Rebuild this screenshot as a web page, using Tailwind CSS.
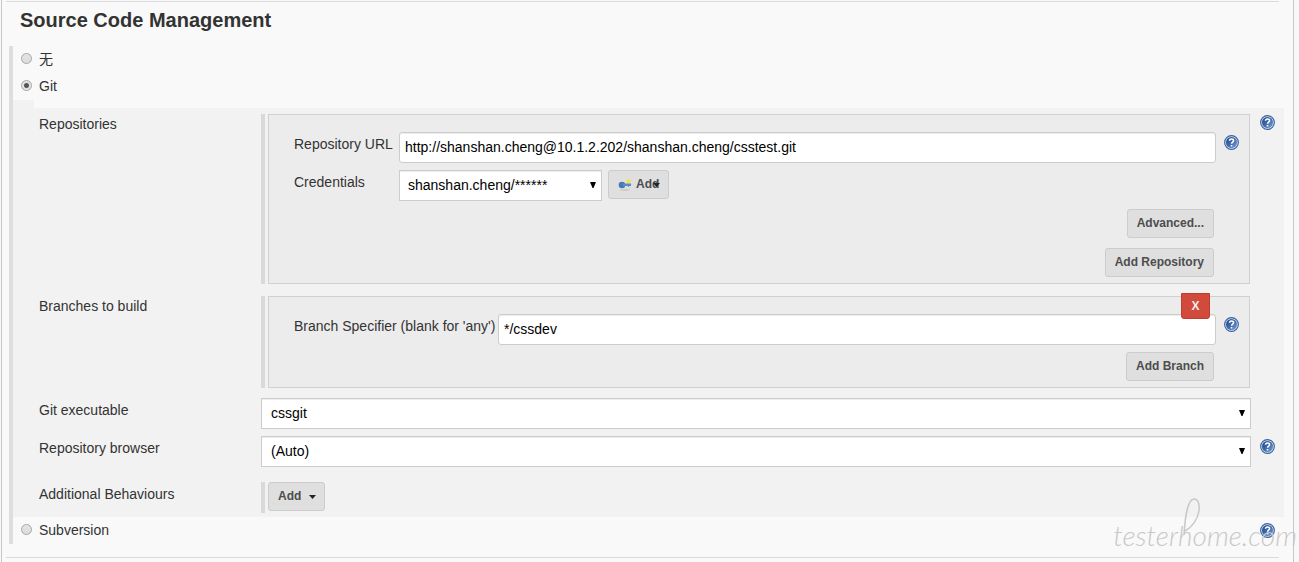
<!DOCTYPE html>
<html lang="en">
<head>
<meta charset="utf-8">
<title>Source Code Management</title>
<script src="https://cdn.jsdelivr.net/npm/@tailwindcss/browser@4"></script>
</head>
<body class="bg-[#f8f8f8] font-['Liberation_Sans','Noto_Sans_CJK_SC',sans-serif] text-sm leading-5 text-[#333]">
<svg class="absolute size-0" aria-hidden="true">
  <defs>
    <linearGradient id="disc" x1="0" y1="0" x2="1" y2="1">
      <stop offset="0" stop-color="#1f4587"/><stop offset=".5" stop-color="#3f69aa"/><stop offset="1" stop-color="#7fa3d4"/>
    </linearGradient>
    <symbol id="help" viewBox="0 0 16 16">
      <circle cx="8" cy="8" r="7.300" fill="#dce6f3" stroke="#34619f" stroke-width="1.200"/>
      <circle cx="8" cy="8" r="5.900" fill="url(#disc)"/>
      <path d="M5.900 6.200C6 3.600 10.300 3.700 10.200 6.200C10.100 7.700 8.200 7.700 8.100 9.300M8 10.700V12.300" fill="none" stroke="#fff" stroke-width="1.700"/>
    </symbol>
    <symbol id="arrow" viewBox="0 0 6 6"><path d="M0 0H6L3.500 6H2.500Z" fill="#000"/></symbol>
    <symbol id="caret" viewBox="0 0 7 4"><path d="M0 0H7L3.500 4Z" fill="#222"/></symbol>
  </defs>
</svg>
<main class="mr-[5px] ml-px border-x border-[#c8c8c8] bg-[#f9f9f9] pt-px pr-[9px] pb-1 pl-1">
  <section class="mr-[5px] border-t border-[#dadada] pl-[14px]">
    <h1 class="pt-1 text-xl leading-7 font-bold">Source Code Management</h1>
  </section>
  <form class="mt-3 ml-[3px] border-l-4 border-[#dedede]">
    <label class="flex h-[27px] items-center gap-[7px] pb-0.5 pl-2">
      <input type="radio" name="scm" class="size-[11px] appearance-none rounded-full border border-[#a6a6a6] bg-linear-to-b from-[#e4e4e4] to-[#dcdcdc]">无
    </label>
    <label class="flex h-[27px] items-center gap-[7px] pb-0.5 pl-2">
      <input type="radio" name="scm" checked class="size-[11px] appearance-none rounded-full border border-[#a6a6a6] bg-[radial-gradient(circle,#555_2px,#e2e2e2_3px)]">Git
    </label>
    <div class="h-2 w-[21px] bg-[#f2f2f2]"></div>
    <div class="bg-[#f2f2f2] pt-1.5 pb-1 pl-[26px]">
      <div class="grid grid-cols-[222px_1fr_33px]">
        <span>Repositories</span>
        <div class="border-l-4 border-[#d9d9d9] pl-[3px]">
          <div class="mr-px border border-[#d0d0d0] bg-[#ececec] pt-[17px] pr-[9px] pb-1.5 pl-[25px]">
            <div class="grid grid-cols-[105px_1fr_auto] gap-y-[7px]">
              <label for="url" class="pt-0.5">Repository URL</label>
              <input id="url" type="text" value="http://shanshan.cheng@10.1.2.202/shanshan.cheng/csstest.git" class="h-[31px] w-full rounded-[3px] border border-[#ccc] bg-white px-[5px] pb-0.5 text-black shadow-[inset_0_1px_1px_rgba(0,0,0,0.075)]">
              <button type="button" aria-label="Help: Repository URL" class="mt-0.5 ml-2 size-4"><svg class="size-[15px]"><use href="#help"/></svg></button>
              <label for="cred" class="pt-0.5">Credentials</label>
              <div class="col-span-2 flex items-start gap-1.5">
                <div class="relative w-[203px]">
                  <select id="cred" class="h-[31px] w-full appearance-none border border-[#ccc] bg-white pb-0.5 pl-2 text-black shadow-[inset_0_1px_1px_rgba(0,0,0,0.075)]"><option>shanshan.cheng/******</option></select>
                  <svg class="pointer-events-none absolute top-3 right-1.5 size-1.5"><use href="#arrow"/></svg>
                </div>
                <button type="button" class="relative flex h-[29px] items-center gap-1 rounded-[3px] border border-[#ccc] bg-[#dfdfdf] pr-[9px] pb-0.5 pl-[9px] text-xs font-bold text-[#4d4d4d]">
                  <svg class="size-[14px]" viewBox="0 0 14 14"><ellipse cx="7" cy="13" rx="5" ry="1" fill="#ccc"/><circle cx="10.300" cy="4.300" r="2.300" fill="#f1e44b"/><circle cx="4" cy="8" r="3.300" fill="#4779b9"/><path d="M5 6.600H13V9H11.500L10.500 10L9.500 9H5Z" fill="#5b8bc7"/></svg>
                  Add
                  <svg class="absolute top-3 right-2 h-1 w-[7px]"><use href="#caret"/></svg>
                </button>
              </div>
            </div>
            <div class="mt-2 mr-[26px] flex flex-col items-end gap-[10px]">
              <button type="button" class="h-[29px] rounded-[3px] border border-[#ccc] bg-[#dfdfdf] px-[9px] pb-0.5 text-xs font-bold text-[#4d4d4d]">Advanced...</button>
              <button type="button" class="h-[29px] rounded-[3px] border border-[#ccc] bg-[#dfdfdf] px-[9px] pb-0.5 text-xs font-bold text-[#4d4d4d]">Add Repository</button>
            </div>
          </div>
        </div>
        <button type="button" aria-label="Help: Repositories" class="ml-[9px] size-4"><svg class="size-[15px]"><use href="#help"/></svg></button>
      </div>
      <div class="mt-3 grid grid-cols-[222px_1fr_33px]">
        <span>Branches to build</span>
        <div class="border-l-4 border-[#d9d9d9] pl-[3px]">
          <div class="relative mr-px border border-[#d0d0d0] bg-[#ececec] pt-[17px] pr-[9px] pb-1.5 pl-[25px]">
            <div class="grid grid-cols-[204px_1fr_auto]">
              <label for="branch" class="pt-0.5">Branch Specifier (blank for 'any')</label>
              <input id="branch" type="text" value="*/cssdev" class="h-[31px] w-full rounded-[3px] border border-[#ccc] bg-white px-[5px] pb-0.5 text-black shadow-[inset_0_1px_1px_rgba(0,0,0,0.075)]">
              <button type="button" aria-label="Help: Branch Specifier" class="mt-0.5 ml-2 size-4"><svg class="size-[15px]"><use href="#help"/></svg></button>
            </div>
            <button type="button" class="absolute -top-1 right-[39px] h-[26px] w-[29px] rounded-b-[3px] border border-[#bd3e31] bg-[#d24a3b] text-xs font-bold text-[#eee]">X</button>
            <div class="mt-[7px] mr-[26px] flex justify-end">
              <button type="button" class="h-[29px] rounded-[3px] border border-[#ccc] bg-[#dfdfdf] px-[9px] pb-0.5 text-xs font-bold text-[#4d4d4d]">Add Branch</button>
            </div>
          </div>
        </div>
      </div>
      <div class="mt-[10px] grid grid-cols-[222px_1fr_33px]">
        <label for="exe" class="pt-0.5">Git executable</label>
        <div class="relative">
          <select id="exe" class="h-[31px] w-full appearance-none border border-[#ccc] bg-white pb-0.5 pl-[9px] text-black shadow-[inset_0_1px_1px_rgba(0,0,0,0.075)]"><option>cssgit</option></select>
          <svg class="pointer-events-none absolute top-3 right-1.5 size-1.5"><use href="#arrow"/></svg>
        </div>
      </div>
      <div class="mt-[7px] grid grid-cols-[222px_1fr_33px]">
        <label for="browser" class="pt-0.5">Repository browser</label>
        <div class="relative">
          <select id="browser" class="h-[31px] w-full appearance-none border border-[#ccc] bg-white pb-0.5 pl-[9px] text-black shadow-[inset_0_1px_1px_rgba(0,0,0,0.075)]"><option>(Auto)</option></select>
          <svg class="pointer-events-none absolute top-3 right-1.5 size-1.5"><use href="#arrow"/></svg>
        </div>
        <button type="button" aria-label="Help: Repository browser" class="mt-0.5 ml-[9px] size-4"><svg class="size-[15px]"><use href="#help"/></svg></button>
      </div>
      <div class="mt-[15px] grid grid-cols-[222px_1fr_33px]">
        <span class="pt-0.5">Additional Behaviours</span>
        <div class="border-l-4 border-[#d9d9d9] pb-0.5 pl-[3px]">
          <button type="button" class="flex h-[29px] items-center gap-2 rounded-[3px] border border-[#ccc] bg-[#dfdfdf] pr-2 pb-0.5 pl-[9px] text-xs font-bold text-[#4d4d4d]">Add <svg class="mt-0.5 h-1 w-[7px]"><use href="#caret"/></svg></button>
        </div>
      </div>
    </div>
    <div class="relative flex h-[27px] items-center justify-between pl-2">
      <label class="flex items-center gap-[7px] pb-0.5">
        <input type="radio" name="scm" class="size-[11px] appearance-none rounded-full border border-[#a6a6a6] bg-linear-to-b from-[#e4e4e4] to-[#dcdcdc]">Subversion
      </label>
      <button type="button" aria-label="Help: Subversion" class="mr-2 size-4"><svg class="size-[15px]"><use href="#help"/></svg></button>
      <div class="pointer-events-none absolute top-0 -right-[13px] font-[Lato] text-[28px] leading-9 font-light whitespace-nowrap text-[#c8c8c8] italic">
        testerhome.com
        <svg class="absolute -top-5 left-[70px] h-10 w-5" viewBox="0 0 20 40" fill="none" stroke="#c8c8c8" stroke-width="1.500"><path d="M1 38C2 20 5 2 11 2C19 2 19 24 2 34"/></svg>
      </div>
    </div>
  </form>
  <div class="mt-[13px] mr-[5px] border-t border-[#dadada]"></div>
</main>
</body>
</html>
